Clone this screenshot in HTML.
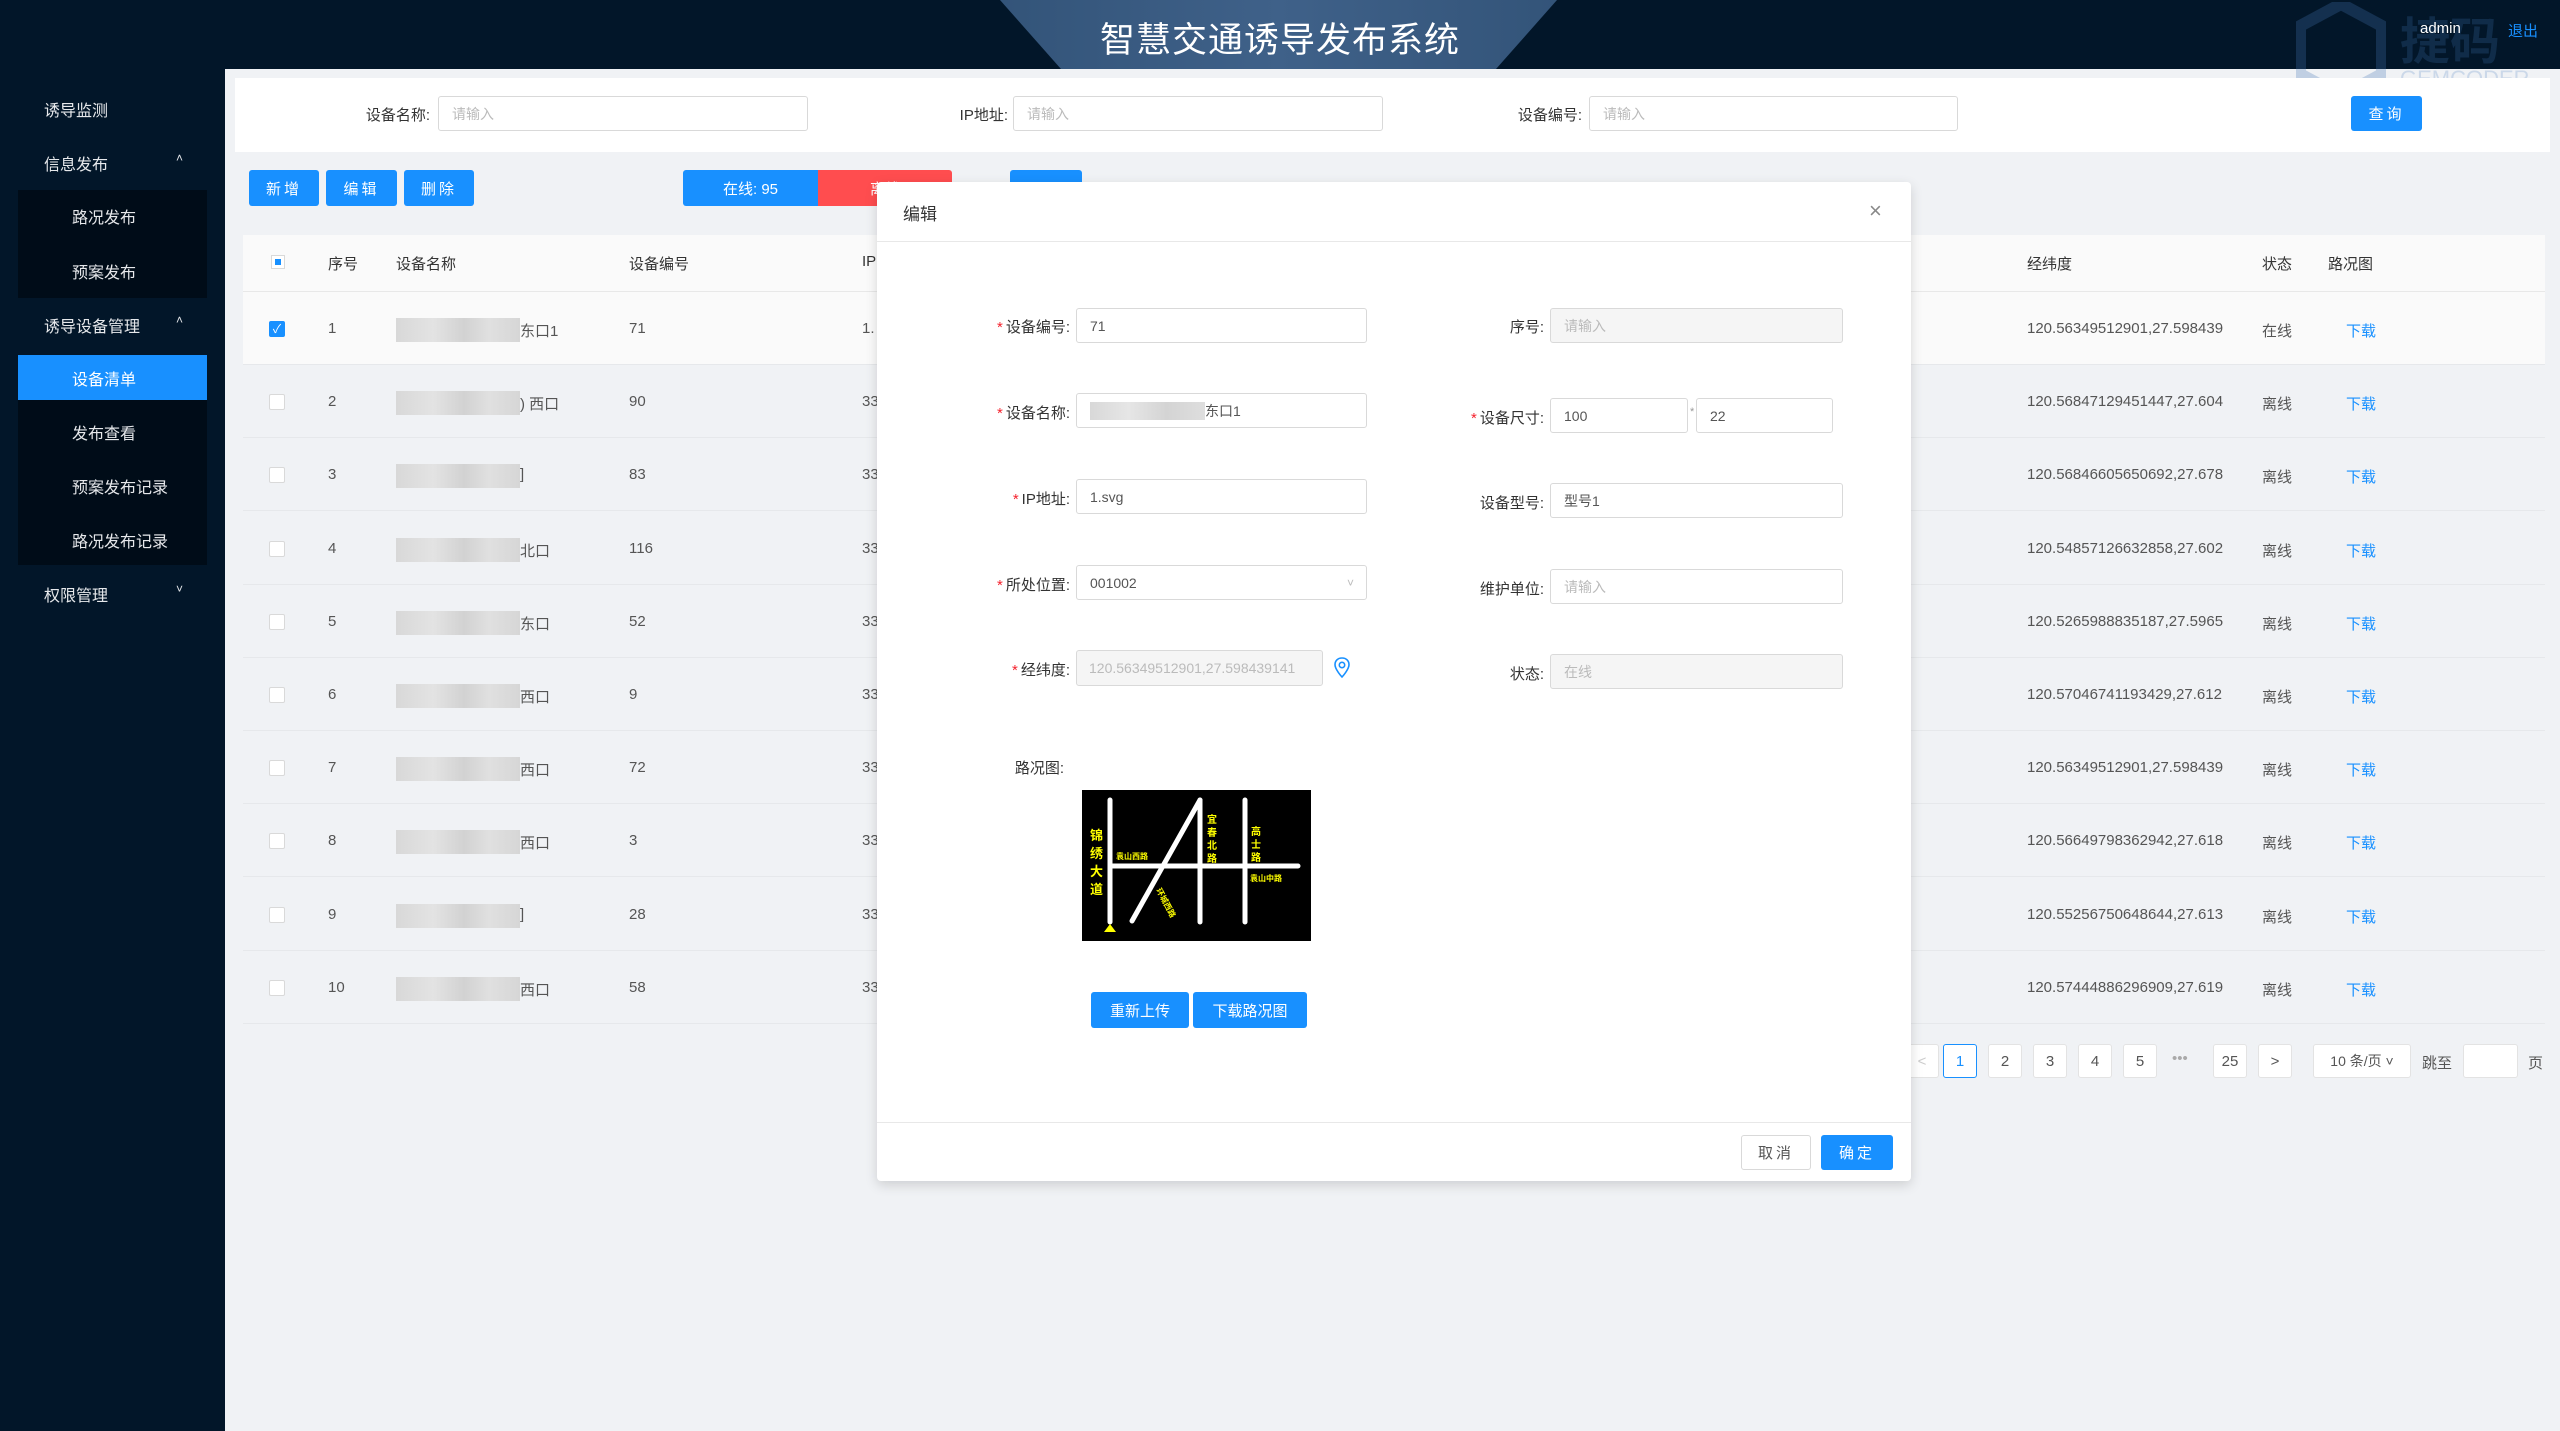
<!DOCTYPE html>
<html><head><meta charset="utf-8"><style>
*{margin:0;padding:0;box-sizing:border-box}
body{width:2560px;height:1431px;position:relative;overflow:hidden;background:#f0f2f5;font-family:"Liberation Sans","Noto Sans CJK SC",sans-serif;font-size:15px;color:#333}
.a{position:absolute}
.hdr{left:0;top:0;width:2560px;height:69px;background:#021629}
.side{left:0;top:69px;width:225px;height:1362px;background:#021629}
.mi{position:absolute;color:#e6e8eb;font-size:16px}
.sub{position:absolute;left:18px;width:189px;background:#000c18}
.inp{position:absolute;background:#fff;border:1px solid #d9d9d9;border-radius:3px;color:#bbb;font-size:14px;padding-left:13px;display:flex;align-items:center}
.btn{position:absolute;background:#1890ff;color:#fff;border-radius:3px;display:flex;align-items:center;justify-content:center;font-size:15px}
.lbl{position:absolute;text-align:right;font-size:15px;color:#333}
.st{color:#f5222d;margin-right:3px}
.cell{position:absolute;font-size:15px;color:#555}
.blur{position:absolute;height:24px;background:linear-gradient(90deg,#d8d8d8 0,#e3e3e3 30%,#d2d2d2 55%,#e0e0e0 75%,#d6d6d6 100%)}
.cb{position:absolute;width:16px;height:16px;border:1px solid #d9d9d9;background:#fff;border-radius:2px}
.pg{position:absolute;top:1044px;width:34px;height:34px;border:1px solid #e3e3e3;border-radius:3px;background:#fff;display:flex;align-items:center;justify-content:center;font-size:15px;color:#555}
</style></head><body>
<div class="a hdr"></div>
<svg class="a" style="left:990px;top:0" width="580" height="69"><defs><linearGradient id="g" x1="0" x2="1"><stop offset="0" stop-color="#335479"/><stop offset=".5" stop-color="#3f6189"/><stop offset="1" stop-color="#335479"/></linearGradient></defs><polygon points="10,0 567,0 506,69 71,69" fill="url(#g)"/></svg>
<div class="a" style="left:0;top:12px;width:2560px;text-align:center;color:#fff;font-size:35px;letter-spacing:1px">智慧交通诱导发布系统</div>
<svg class="a" style="left:2296px;top:2px" width="90" height="96" viewBox="0 0 90 96"><polygon points="45,2 86,24 86,72 45,94 4,72 4,24" fill="none" stroke="rgba(70,120,180,.28)" stroke-width="12"/></svg>
<div class="a" style="left:2400px;top:2px;font-size:50px;font-weight:bold;color:rgba(60,110,170,.25)">捷码</div>
<div class="a" style="left:2400px;top:66px;font-size:22px;color:rgba(90,140,200,.25)">GEMCODER</div>
<div class="a" style="left:2420px;top:20px;color:#fff;font-size:15px">admin</div>
<div class="a" style="left:2508px;top:20px;color:#1890ff;font-size:15px">退出</div>

<div class="a side"></div>
<div class="mi" style="left:44px;top:97px">诱导监测</div>
<div class="mi" style="left:44px;top:151px">信息发布</div><div class="mi" style="left:176px;top:151px;font-size:12px">˄</div>
<div class="sub" style="top:190px;height:108px"></div>
<div class="mi" style="left:72px;top:204px">路况发布</div>
<div class="mi" style="left:72px;top:259px">预案发布</div>
<div class="mi" style="left:44px;top:313px">诱导设备管理</div><div class="mi" style="left:176px;top:313px;font-size:12px">˄</div>
<div class="sub" style="top:355px;height:210px"></div>
<div class="a" style="left:18px;top:355px;width:189px;height:45px;background:#1890ff"></div>
<div class="mi" style="left:72px;top:366px;color:#fff">设备清单</div>
<div class="mi" style="left:72px;top:420px">发布查看</div>
<div class="mi" style="left:72px;top:474px">预案发布记录</div>
<div class="mi" style="left:72px;top:528px">路况发布记录</div>
<div class="mi" style="left:44px;top:582px">权限管理</div><div class="mi" style="left:176px;top:582px;font-size:12px">˅</div>

<div class="a" style="left:235px;top:78px;width:2315px;height:74px;background:#fff"></div>
<div class="lbl" style="left:340px;top:104px;width:90px">设备名称:</div>
<div class="inp" style="left:438px;top:96px;width:370px;height:35px">请输入</div>
<div class="lbl" style="left:920px;top:104px;width:88px">IP地址:</div>
<div class="inp" style="left:1013px;top:96px;width:370px;height:35px">请输入</div>
<div class="lbl" style="left:1490px;top:104px;width:92px">设备编号:</div>
<div class="inp" style="left:1589px;top:96px;width:369px;height:35px">请输入</div>
<div class="btn" style="left:2351px;top:96px;width:71px;height:35px;letter-spacing:3px">查询</div>

<div class="btn" style="left:249px;top:170px;width:70px;height:36px;letter-spacing:3px">新增</div>
<div class="btn" style="left:326px;top:170px;width:71px;height:36px;letter-spacing:3px">编辑</div>
<div class="btn" style="left:404px;top:170px;width:70px;height:36px;letter-spacing:3px">删除</div>
<div class="btn" style="left:683px;top:170px;width:135px;height:36px;border-radius:3px 0 0 3px">在线: 95</div>
<div class="btn" style="left:818px;top:170px;width:134px;height:36px;background:#ff4d4f;border-radius:0 3px 3px 0">离线</div>
<div class="btn" style="left:1010px;top:170px;width:72px;height:36px"></div>

<div class="a" style="left:243px;top:235px;width:2302px;height:57px;background:#fafafa;border-bottom:1px solid #e8e8e8"></div>
<div class="a" style="left:271px;top:255px;width:14px;height:14px;border:1px solid #d9d9d9;background:#fff"><div style="margin:3px;width:6px;height:6px;background:#1890ff"></div></div>
<div class="cell" style="left:328px;top:253px;color:#333">序号</div>
<div class="cell" style="left:396px;top:253px;color:#333">设备名称</div>
<div class="cell" style="left:629px;top:253px;color:#333">设备编号</div>
<div class="cell" style="left:862px;top:253px;color:#333">IP</div>
<div class="cell" style="left:2027px;top:253px;color:#333">经纬度</div>
<div class="cell" style="left:2262px;top:253px;color:#333">状态</div>
<div class="cell" style="left:2328px;top:253px;color:#333">路况图</div>
<div class="a" style="left:243px;top:292px;width:2302px;height:73px;background:#fafafa"></div>
<div id="rows"></div>
<script>
var d=[["东口1","71","120.56349512901,27.598439","在线"],[") 西口","90","120.56847129451447,27.604","离线"],["]","83","120.56846605650692,27.678","离线"],["北口","116","120.54857126632858,27.602","离线"],["东口","52","120.5265988835187,27.5965","离线"],["西口","9","120.57046741193429,27.612","离线"],["西口","72","120.56349512901,27.598439","离线"],["西口","3","120.56649798362942,27.618","离线"],["]","28","120.55256750648644,27.613","离线"],["西口","58","120.57444886296909,27.619","离线"]];
var h="";for(var i=0;i<10;i++){var y=292+i*73.2,c=y+28;
h+='<div class="a" style="left:243px;top:'+(y+72)+'px;width:2302px;height:1px;background:#e6e8eb"></div>';
h+=i==0?'<div class="cb" style="left:269px;top:'+(c+1)+'px;background:#1890ff;border-color:#1890ff;color:#fff;font-size:12px;line-height:14px;text-align:center">✓</div>':'<div class="cb" style="left:269px;top:'+(c+1)+'px"></div>';
h+='<div class="cell" style="left:328px;top:'+c+'px">'+(i+1)+'</div>';
h+='<div class="blur" style="left:396px;top:'+(c-2)+'px;width:124px"></div>';
h+='<div class="cell" style="left:520px;top:'+c+'px">'+d[i][0]+'</div>';
h+='<div class="cell" style="left:629px;top:'+c+'px">'+d[i][1]+'</div>';
h+='<div class="cell" style="left:862px;top:'+c+'px">'+(i==0?'1.':'33')+'</div>';
h+='<div class="cell" style="left:2027px;top:'+c+'px">'+d[i][2]+'</div>';
h+='<div class="cell" style="left:2262px;top:'+c+'px">'+d[i][3]+'</div>';
h+='<div class="cell" style="left:2346px;top:'+c+'px;color:#1890ff">下载</div>';}
document.getElementById("rows").innerHTML=h;
</script>
<div class="pg" style="left:1905px;color:#ccc">&lt;</div>
<div class="pg" style="left:1943px;border-color:#1890ff;color:#1890ff">1</div>
<div class="pg" style="left:1988px">2</div>
<div class="pg" style="left:2033px">3</div>
<div class="pg" style="left:2078px">4</div>
<div class="pg" style="left:2123px">5</div>
<div class="a" style="left:2172px;top:1050px;color:#aaa">•••</div>
<div class="pg" style="left:2213px">25</div>
<div class="pg" style="left:2258px">&gt;</div>
<div class="pg" style="left:2313px;width:98px;font-size:14px">10 条/页 ˅</div>
<div class="a" style="left:2422px;top:1052px;color:#555">跳至</div>
<div class="pg" style="left:2463px;width:55px"></div>
<div class="a" style="left:2528px;top:1052px;color:#555">页</div>

<div class="a" style="left:877px;top:182px;width:1034px;height:999px;background:#fff;border-radius:4px;box-shadow:0 4px 12px rgba(0,0,0,.15)"></div>
<div class="a" style="left:877px;top:241px;width:1034px;height:1px;background:#e8e8e8"></div>
<div class="a" style="left:903px;top:200px;font-size:17px;color:#333">编辑</div>
<div class="a" style="left:1869px;top:198px;font-size:22px;color:#888">×</div>

<div class="lbl" style="left:940px;top:316px;width:130px"><span class="st">*</span>设备编号:</div>
<div class="inp" style="left:1076px;top:308px;width:291px;height:35px;color:#555">71</div>
<div class="lbl" style="left:1420px;top:316px;width:124px">序号:</div>
<div class="inp" style="left:1550px;top:308px;width:293px;height:35px;background:#f5f5f5">请输入</div>

<div class="lbl" style="left:940px;top:402px;width:130px"><span class="st">*</span>设备名称:</div>
<div class="inp" style="left:1076px;top:393px;width:291px;height:35px;color:#555"><span style="display:inline-block;width:115px;height:18px;background:linear-gradient(90deg,#d8d8d8,#e6e6e6,#d4d4d4,#dedede)"></span>东口1</div>
<div class="lbl" style="left:1420px;top:407px;width:124px"><span class="st">*</span>设备尺寸:</div>
<div class="inp" style="left:1550px;top:398px;width:138px;height:35px;color:#555">100</div>
<div class="a" style="left:1690px;top:406px;font-size:11px;color:#999">*</div>
<div class="inp" style="left:1696px;top:398px;width:137px;height:35px;color:#555">22</div>

<div class="lbl" style="left:940px;top:488px;width:130px"><span class="st">*</span>IP地址:</div>
<div class="inp" style="left:1076px;top:479px;width:291px;height:35px;color:#555">1.svg</div>
<div class="lbl" style="left:1420px;top:492px;width:124px">设备型号:</div>
<div class="inp" style="left:1550px;top:483px;width:293px;height:35px;color:#555">型号1</div>

<div class="lbl" style="left:940px;top:574px;width:130px"><span class="st">*</span>所处位置:</div>
<div class="inp" style="left:1076px;top:565px;width:291px;height:35px;color:#555">001002<span style="position:absolute;right:12px;color:#bbb;font-size:12px">˅</span></div>
<div class="lbl" style="left:1420px;top:578px;width:124px">维护单位:</div>
<div class="inp" style="left:1550px;top:569px;width:293px;height:35px">请输入</div>

<div class="lbl" style="left:940px;top:659px;width:130px"><span class="st">*</span>经纬度:</div>
<div class="inp" style="left:1076px;top:650px;width:247px;height:36px;background:#f5f5f5;font-size:14px;padding-left:12px">120.56349512901,27.598439141</div>
<svg class="a" style="left:1333px;top:657px" width="18" height="22" viewBox="0 0 18 22"><path d="M9 1C4.6 1 2 4 2 7.8 2 12.5 9 20 9 20s7-7.5 7-12.2C16 4 13.4 1 9 1z" fill="none" stroke="#1890ff" stroke-width="1.6"/><circle cx="9" cy="8" r="2.7" fill="none" stroke="#1890ff" stroke-width="1.6"/></svg>
<div class="lbl" style="left:1420px;top:663px;width:124px">状态:</div>
<div class="inp" style="left:1550px;top:654px;width:293px;height:35px;background:#f5f5f5">在线</div>

<div class="lbl" style="left:970px;top:757px;width:94px">路况图:</div>
<svg class="a" style="left:1082px;top:790px" width="229" height="151" viewBox="0 0 229 151">
<rect width="229" height="151" fill="#000"/>
<g stroke="#fff" stroke-width="5" stroke-linecap="round" fill="none">
<line x1="28" y1="10" x2="28" y2="132"/><line x1="50" y1="131" x2="118" y2="10"/><line x1="118" y1="10" x2="118" y2="132"/><line x1="163" y1="10" x2="163" y2="132"/><line x1="28" y1="76" x2="216" y2="76"/></g>
<polygon points="22,142 28,134 34,142" fill="#ff0"/>
<g fill="#ff0" font-weight="bold" font-family="Noto Sans CJK SC,sans-serif">
<text x="8" y="50" font-size="13">锦</text><text x="8" y="68" font-size="13">绣</text><text x="8" y="86" font-size="13">大</text><text x="8" y="104" font-size="13">道</text>
<text x="34" y="69" font-size="8">袁山西路</text>
<text x="125" y="33" font-size="10">宜</text><text x="125" y="46" font-size="10">春</text><text x="125" y="59" font-size="10">北</text><text x="125" y="72" font-size="10">路</text>
<text x="169" y="45" font-size="10">高</text><text x="169" y="58" font-size="10">士</text><text x="169" y="71" font-size="10">路</text>
<text x="168" y="91" font-size="8">袁山中路</text>
<text transform="translate(74,100) rotate(62)" font-size="8">环城西路</text></g></svg>
<div class="btn" style="left:1091px;top:992px;width:98px;height:36px">重新上传</div>
<div class="btn" style="left:1193px;top:992px;width:114px;height:36px">下载路况图</div>

<div class="a" style="left:877px;top:1122px;width:1034px;height:1px;background:#e8e8e8"></div>
<div class="a" style="left:1741px;top:1135px;width:70px;height:35px;border:1px solid #d9d9d9;border-radius:3px;display:flex;align-items:center;justify-content:center;letter-spacing:3px;color:#555">取消</div>
<div class="btn" style="left:1821px;top:1135px;width:72px;height:35px;letter-spacing:3px">确定</div>
</body></html>
